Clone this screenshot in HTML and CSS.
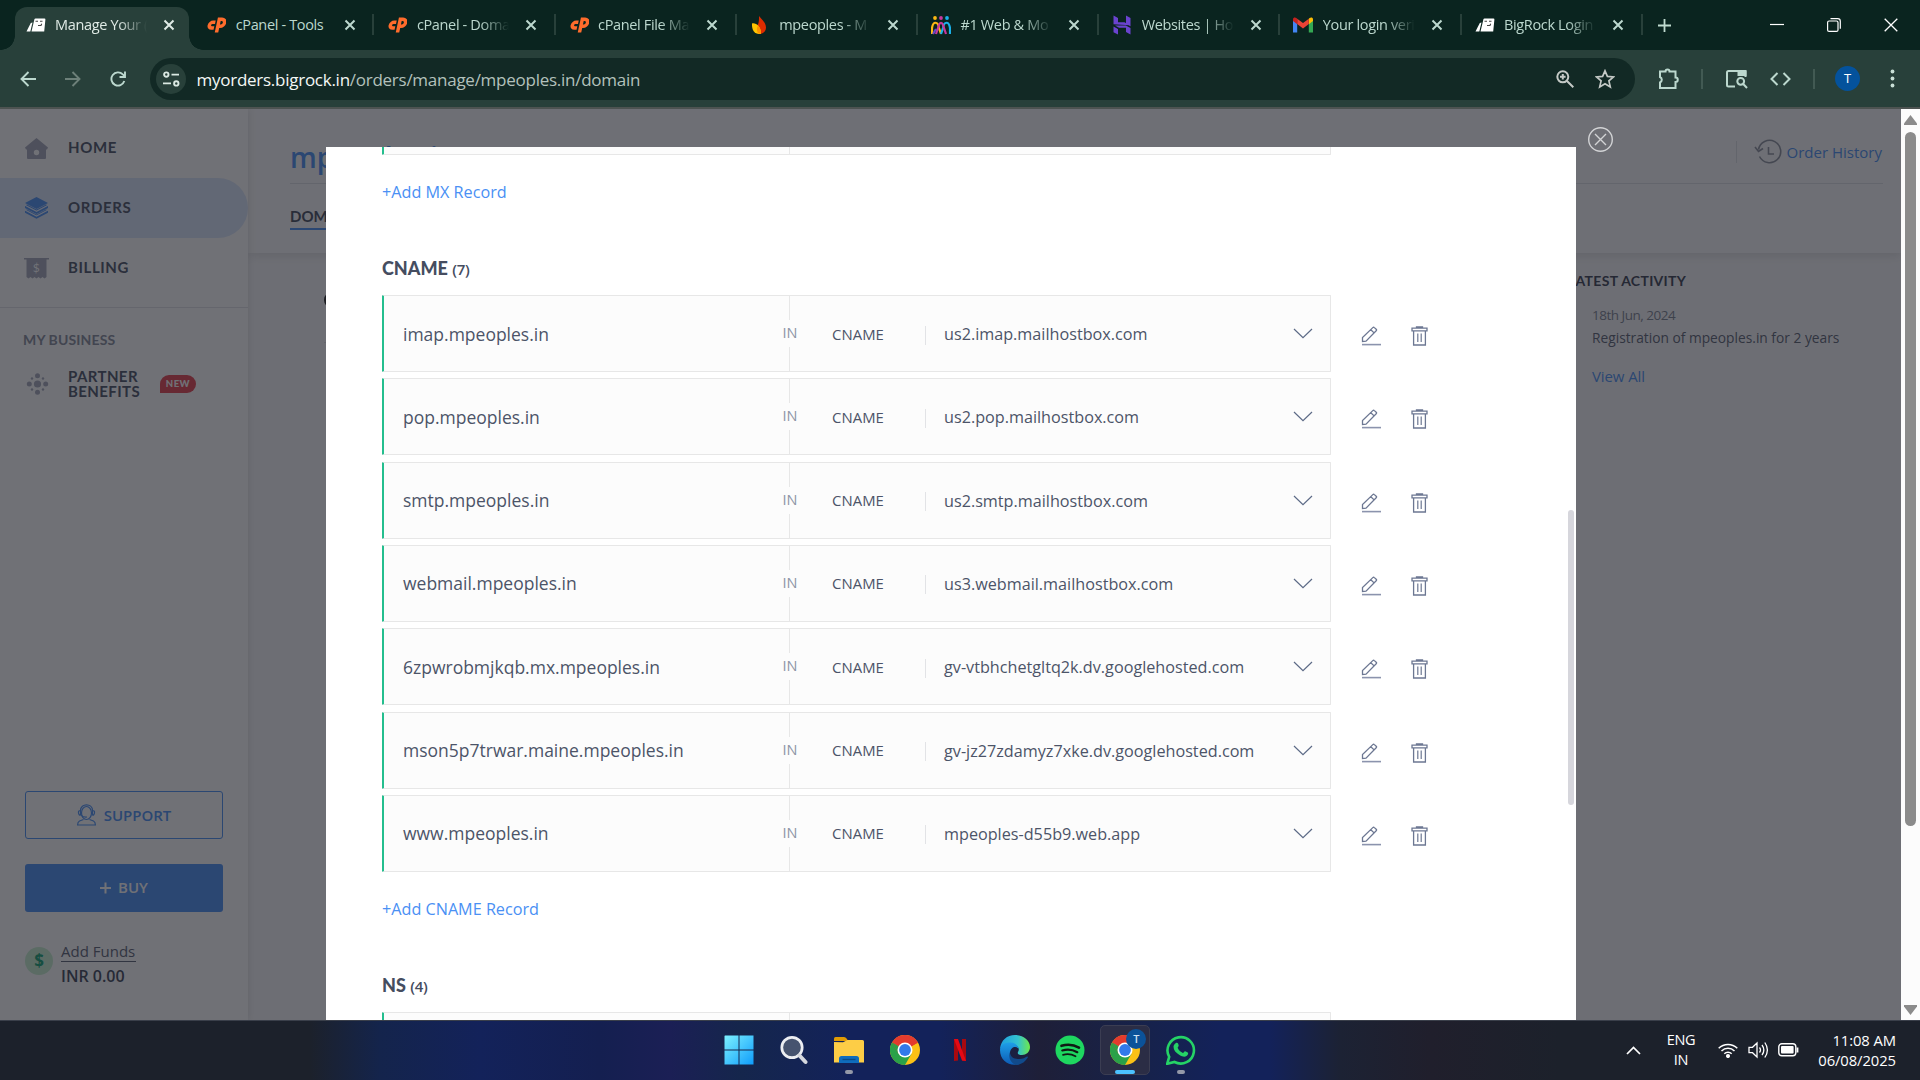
FILE: index.html
```html
<!DOCTYPE html>
<html lang="en">
<head>
<meta charset="utf-8">
<title>Manage Your Orders</title>
<link rel="stylesheet" href="styles.css">
</head>
<body>
<svg class="defs" aria-hidden="true">
  <symbol id="x" viewBox="0 0 12 12"><path d="M1.500 1.500l9 9M10.500 1.500l-9 9" fill="none" stroke="currentColor" stroke-width="2"/></symbol>
  <symbol id="bigrock" viewBox="0 0 20 20"><path d="M8.500 4Q8.700 3.500 9.500 3.500H18.500q1 0 .9 1L18.200 16.500H5.500z" fill="#fff"/><path d="M4.800 8L6.500 7.500 4.300 16.500H.5z" fill="#fff"/><path d="M9.500 6.200h2.500M14 6.200h2.500M12 10.500h3l.7-1.800" stroke="#444" stroke-width="1.100" fill="none"/></symbol>
  <symbol id="cpanel" viewBox="0 0 20 20"><g transform="translate(2.500 2) skewX(-12)"><path d="M8 5.300H5.500a2.800 2.800 0 0 0 0 5.800h2.300M11.300 15.600V2.300h2.500a3.300 3.300 0 0 1 0 7h-.9" fill="none" stroke="#ff6c2c" stroke-width="3.500"/></g></symbol>
  <symbol id="firebase" viewBox="0 0 20 20"><path d="M9 1c2 3 7 6 7 11.500 0 4-3 6.500-7 6.500-2-2-3-6-1-9.500C9.200 6 9 3 9 1z" fill="#dd2c00"/><path d="M2 8.500c4-1 9 3 9 10.300C5.500 20 1.500 16 2 8.500z" fill="#ffc400"/><path d="M8 10.500c2 2 3 4.500 3 8.300-2 .3-3-.6-3.600-1.800-.9-2-.7-4.500.6-6.500z" fill="#ff9100"/></symbol>
  <symbol id="people" viewBox="0 0 20 20"><g fill="none" stroke-width="2.200"><path d="M1 19V13c1-7 6-7 7 0l2 6" stroke="#fcb813"/><path d="M19 19v-6c-1-7-6-7-7 0l-2 6" stroke="#1ab0e8"/><path d="M5 19l3-9c1-3 3-3 4 0l3 9" stroke="#c8379d"/><path d="M2 19l3-5" stroke="#6747c7"/></g><circle cx="4" cy="3" r="1.900" fill="#fcb813"/><circle cx="10" cy="3" r="1.900" fill="#c8379d"/><circle cx="16" cy="3" r="1.900" fill="#1ab0e8"/></symbol>
  <symbol id="hostinger" viewBox="0 0 20 20"><path d="M1.500 9.300V.5L6 3v4.200l6.500.1 5 3zM14 .5L18.500 3v8.300L14 9zM1.500 11.500L6 14v5.500l-4.500-2.200zM3 10.500h10.800l4.700 2.500v6.500L14 17v-4.200H7z" fill="#6a43cf"/></symbol>
  <symbol id="gmail" viewBox="0 0 20 15"><path d="M0 2.500V15h4.200V5z" fill="#4285f4"/><path d="M20 2.500V15h-4.200V5z" fill="#34a853"/><path d="M15.800 1.200V6.800L20 3.600V1.800C20 0 18 -.6 16.600.5z" fill="#fbbc04"/><path d="M4.200 1.200L10 5.500l5.800-4.300v5.400L10 11 4.200 6.600z" fill="#ea4335"/><path d="M0 1.800v1.800l4.200 3.200V1.200L3.400.5C2-.6 0 0 0 1.800z" fill="#c5221f"/></symbol>
  <symbol id="chrome" viewBox="0 0 30 30"><circle cx="15" cy="15" r="15" fill="#fbc116"/><path d="M15 15L2 7.500A15 15 0 0 1 28 7.500z" fill="#e33b2e"/><path d="M2 7.500A15 15 0 0 0 15 30l6.500-11.200L15 15z" fill="#2aa148"/><path d="M8.500 18.700L2 7.500 15 15zM28 7.500H15V15z" fill="#e33b2e"/><path d="M2 7.500l6.500 11.300L15 15z" fill="#2aa148"/><circle cx="15" cy="15" r="7.500" fill="#fff"/><circle cx="15" cy="15" r="5.900" fill="#3279ea"/></symbol>
  <symbol id="chev" viewBox="0 0 20 11"><path d="M1 1l9 8.700L19 1" fill="none" stroke="#5c6a86" stroke-width="1.200"/></symbol>
  <symbol id="pencil" viewBox="0 0 20 20"><path d="M1 18.600h19" stroke="#8b93ad" stroke-width="1.600"/><path d="M1.500 15.500V11.500L11.800 1.600c.6-.6 1-.6 1.600 0l1.800 1.700c.5.500.5 1 0 1.500L5 15.200zM9.800 3.700l3.300 3.200" fill="none" stroke="#6c7792" stroke-width="1.300"/></symbol>
  <symbol id="trash" viewBox="0 0 17 20"><path d="M1 2.200h15v2.600H1zM5.500 1.800V.8h6v1M2.600 5v14h11.800V5" fill="none" stroke="#6c7792" stroke-width="1.300"/><path d="M6.800 7.500v8.500M10.200 7.500v8.500" stroke="#6c7792" stroke-width="1.200"/></symbol>
</svg>

<header class="tabs">
  <div class="tab active"><svg class="fav"><use href="#bigrock"/></svg><span class="tt">Manage Your (</span><svg class="tx"><use href="#x"/></svg></div>
  <div class="tab nosep"><svg class="fav"><use href="#cpanel"/></svg><span class="tt">cPanel - Tools</span><svg class="tx"><use href="#x"/></svg></div>
  <div class="tab"><svg class="fav"><use href="#cpanel"/></svg><span class="tt">cPanel - Doma</span><svg class="tx"><use href="#x"/></svg></div>
  <div class="tab"><svg class="fav"><use href="#cpanel"/></svg><span class="tt">cPanel File Ma</span><svg class="tx"><use href="#x"/></svg></div>
  <div class="tab"><svg class="fav"><use href="#firebase"/></svg><span class="tt">mpeoples - M</span><svg class="tx"><use href="#x"/></svg></div>
  <div class="tab"><svg class="fav"><use href="#people"/></svg><span class="tt">#1 Web &amp; Mo</span><svg class="tx"><use href="#x"/></svg></div>
  <div class="tab"><svg class="fav"><use href="#hostinger"/></svg><span class="tt">Websites | Hos</span><svg class="tx"><use href="#x"/></svg></div>
  <div class="tab"><svg class="fav"><use href="#gmail"/></svg><span class="tt">Your login veri</span><svg class="tx"><use href="#x"/></svg></div>
  <div class="tab"><svg class="fav"><use href="#bigrock"/></svg><span class="tt">BigRock Login</span><svg class="tx"><use href="#x"/></svg></div>
  <div class="newtab"><svg width="13" height="13"><path d="M6.500 0v13M0 6.500h13" stroke="#c0dbd0" stroke-width="1.800"/></svg></div>
  <div class="winbtns">
    <svg width="14" height="14"><path d="M0 6.500h14" stroke="#fff" stroke-width="1.200"/></svg>
    <svg width="14" height="14"><rect x=".6" y="3" width="10.400" height="10.400" rx="1.500" fill="none" stroke="#fff" stroke-width="1.200"/><path d="M3.500.7h7.200a2.600 2.600 0 0 1 2.600 2.600v7.500" fill="none" stroke="#fff" stroke-width="1.200"/></svg>
    <svg width="14" height="14"><path d="M.7.7l12.600 12.600M13.300.7L.7 13.300" stroke="#fff" stroke-width="1.300"/></svg>
  </div>
</header>

<nav class="toolbar">
  <div class="navbtns">
    <svg width="16" height="16"><path d="M16 8H1.500M8.500 1L1.500 8l7 7" fill="none" stroke="#bcd8ce" stroke-width="1.900"/></svg>
    <svg width="16" height="16"><path d="M0 8h14.500M7.500 1l7 7-7 7" fill="none" stroke="#6d8079" stroke-width="1.900"/></svg>
    <svg width="16" height="16"><path d="M14.300 10A6.600 6.600 0 1 1 12.800 3.400L15 5.500M15 .5v5.500H9.500" fill="none" stroke="#bcd8ce" stroke-width="1.900"/></svg>
  </div>
  <div class="omni">
    <span class="chip"><svg width="17" height="16" fill="none" stroke="#dbe9e3" stroke-width="1.900"><circle cx="3.300" cy="3.600" r="2.200"/><path d="M8.500 3.600H16M0 12.400h8"/><circle cx="13.300" cy="12.400" r="2.200"/></svg></span>
    <span class="url"><b>myorders.bigrock.in</b>/orders/manage/mpeoples.in/domain</span>
    <svg width="18" height="18" class="mag" fill="none" stroke="#c4c9c6" stroke-width="2"><circle cx="6.800" cy="6.800" r="5.500"/><path d="M11 11l6.300 6.300M6.800 4v5.600M4 6.800h5.600"/></svg>
    <svg width="20" height="20" viewBox="0 0 20 20" class="star"><path d="M10 1.800l2.400 5.600 6.100.5-4.600 4 1.400 6L10 14.700l-5.300 3.200 1.400-6-4.600-4 6.100-.5z" fill="none" stroke="#c4c9c6" stroke-width="1.700"/></svg>
  </div>
  <svg class="ext" width="22" height="22"><path d="M2 4.500h5.500a2 2 0 1 1 4 0h6v6a2 2 0 1 1 0 4.500v6H2v-5.500a3 3 0 0 0 0-5.500z" fill="none" stroke="#bcd8ce" stroke-width="2"/></svg>
  <i class="sep s1"></i>
  <svg class="side" width="23" height="20"><path d="M10 17.500H3.500q-1.500 0-1.500-1.500V3.500Q2 2 3.500 2H20.500v6" fill="none" stroke="#bcd8ce" stroke-width="2"/><path d="M12.500 1H20q1.500 0 1.500 1.500V7h-9z" fill="#bcd8ce"/><circle cx="15.700" cy="12.300" r="3.400" fill="none" stroke="#bcd8ce" stroke-width="2"/><path d="M18 14.800l4 4.200" stroke="#bcd8ce" stroke-width="2"/></svg>
  <svg class="code" width="21" height="14"><path d="M7.500 1L1.500 7l6 6M13.500 1l6 6-6 6" fill="none" stroke="#bcd8ce" stroke-width="2"/></svg>
  <i class="sep s2"></i>
  <span class="avatar">T</span>
  <svg class="dots" width="5" height="19" fill="#c9dfd6"><circle cx="2.500" cy="2.500" r="1.900"/><circle cx="2.500" cy="9.500" r="1.900"/><circle cx="2.500" cy="16.500" r="1.900"/></svg>
</nav>

<div class="viewport">
  <aside class="sidebar">
    <a class="item"><svg width="25" height="23"><path d="M12.500 1L24 10.500l-1 2h-1V21q0 1-1 1H4q-1 0-1-1v-8.500H2l-1-2z" fill="#a5a9bb"/><circle cx="12.500" cy="15.500" r="2.700" fill="#fff"/></svg><span>HOME</span></a>
    <a class="item on"><svg width="25" height="24" fill="#4a90f4"><path d="M12.500 1L24 7 12.500 13 1 7zM1 9.500l2-1L12.500 13.500 22 8.500l2 1v2.500l-11.500 6L1 12zM1 14.500l2-1 9.500 5 9.500-5 2 1v2.200l-11.500 6L1 16.700z"/><path d="M1 9.300l11.500 6 11.500-6M1 14l11.500 6L24 14" fill="none" stroke="#e8f0ff" stroke-width="1.200"/></svg><span>ORDERS</span></a>
    <a class="item"><svg width="25" height="23"><path d="M0 1h25v1.500h-2.500V20l-2 1.500-2-1.500-2 1.500-2-1.500-2 1.500-2-1.500-2 1.500-2-1.500-2 1.500-2-1.500V2.500H0z" fill="#a5a9bb"/><text x="12.500" y="15" text-anchor="middle" class="dl">$</text></svg><span>BILLING</span></a>
    <hr>
    <h6>MY BUSINESS</h6>
    <a class="item partner"><svg width="22" height="22" viewBox="-1 0 22 22" fill="#a5a9bb"><circle cx="11" cy="11" r="3.600"/><circle cx="11" cy="2.800" r="2.500"/><circle cx="11" cy="19.200" r="2.500"/><circle cx="2.800" cy="11" r="2.500"/><circle cx="19.200" cy="11" r="2.500"/><circle cx="5.500" cy="5.500" r="1.200"/><circle cx="16.500" cy="5.500" r="1.200"/><circle cx="5.500" cy="16.500" r="1.200"/><circle cx="16.500" cy="16.500" r="1.200"/></svg><span>PARTNER<br>BENEFITS</span><em>NEW</em></a>
    <div class="grow"></div>
    <a class="btn support"><svg width="19" height="22" fill="none" stroke="#4a90f4" stroke-width="1.200"><ellipse cx="9.500" cy="9" rx="5" ry="6.500"/><path d="M3.500 6.500C3.500-1 15.500-1 15.500 6.500M3.500 6.500q-2.500 0-2 2.500t2 2zM15.500 6.500q2.500 0 2 2.500t-2 2zM4 11q2 2.500 6 2M6.500 15.500L2.500 17Q.6 18 .6 21h17.800q0-3-1.900-4l-4-1.500"/></svg><span>SUPPORT</span></a>
    <a class="btn buy"><svg width="11" height="12"><path d="M5.500.5v11M0 6h11" stroke="#fff" stroke-width="2"/></svg><span>BUY</span></a>
    <div class="funds"><i>$</i><p><u>Add Funds</u><b>INR 0.00</b></p></div>
  </aside>

  <main class="main">
    <section class="head">
      <div class="title"><h1>mpeoples.in</h1><div class="hist"><svg width="28" height="26" fill="none" stroke="#8d929f" stroke-width="1.600"><path d="M5.500 17.500A11.200 11.200 0 1 0 4.500 10.500M1 8l3.500 4.500L9 9.500M14.500 8v7H20"/></svg>Order History</div></div>
      <div class="subtabs"><span>DOMAIN</span></div>
    </section>
    <section class="body">
      <div class="panel"><i></i></div>
      <div class="activity"><h3>LATEST ACTIVITY</h3><p class="dt">18th Jun, 2024</p><p>Registration of mpeoples.in for 2 years</p><a>View All</a></div>
    </section>
  </main>

  <div class="scroll"><svg width="13" height="10"><path d="M6.500 0L13 8.500V10H0V8.500z" fill="#8b8b8b"/></svg><i></i><svg width="13" height="10"><path d="M6.500 10L13 1.500V0H0v1.500z" fill="#8b8b8b"/></svg></div>

  <div class="overlay"></div>
  <svg class="close" width="26" height="26" fill="none" stroke="#d2d3d5" stroke-width="1.400"><circle cx="12.500" cy="12.500" r="11.800"/><path d="M7 7l11 11M18 7L7 18"/></svg>

  <div class="modal">
    <div class="rec stub top"><div class="box"></div></div>
    <a class="add mx">+Add MX Record</a>
    <h2>CNAME <small>(7)</small></h2>
    <div class="list">
      <div class="rec"><div class="box"><span class="nm">imap.mpeoples.in</span><span class="cls">IN</span><span class="ty">CNAME</span><span class="val">us2.imap.mailhostbox.com</span><svg class="cv"><use href="#chev"/></svg></div><svg class="pc"><use href="#pencil"/></svg><svg class="tr"><use href="#trash"/></svg></div>
      <div class="rec"><div class="box"><span class="nm">pop.mpeoples.in</span><span class="cls">IN</span><span class="ty">CNAME</span><span class="val">us2.pop.mailhostbox.com</span><svg class="cv"><use href="#chev"/></svg></div><svg class="pc"><use href="#pencil"/></svg><svg class="tr"><use href="#trash"/></svg></div>
      <div class="rec"><div class="box"><span class="nm">smtp.mpeoples.in</span><span class="cls">IN</span><span class="ty">CNAME</span><span class="val">us2.smtp.mailhostbox.com</span><svg class="cv"><use href="#chev"/></svg></div><svg class="pc"><use href="#pencil"/></svg><svg class="tr"><use href="#trash"/></svg></div>
      <div class="rec"><div class="box"><span class="nm">webmail.mpeoples.in</span><span class="cls">IN</span><span class="ty">CNAME</span><span class="val">us3.webmail.mailhostbox.com</span><svg class="cv"><use href="#chev"/></svg></div><svg class="pc"><use href="#pencil"/></svg><svg class="tr"><use href="#trash"/></svg></div>
      <div class="rec"><div class="box"><span class="nm">6zpwrobmjkqb.mx.mpeoples.in</span><span class="cls">IN</span><span class="ty">CNAME</span><span class="val">gv-vtbhchetgltq2k.dv.googlehosted.com</span><svg class="cv"><use href="#chev"/></svg></div><svg class="pc"><use href="#pencil"/></svg><svg class="tr"><use href="#trash"/></svg></div>
      <div class="rec"><div class="box"><span class="nm">mson5p7trwar.maine.mpeoples.in</span><span class="cls">IN</span><span class="ty">CNAME</span><span class="val">gv-jz27zdamyz7xke.dv.googlehosted.com</span><svg class="cv"><use href="#chev"/></svg></div><svg class="pc"><use href="#pencil"/></svg><svg class="tr"><use href="#trash"/></svg></div>
      <div class="rec"><div class="box"><span class="nm">www.mpeoples.in</span><span class="cls">IN</span><span class="ty">CNAME</span><span class="val">mpeoples-d55b9.web.app</span><svg class="cv"><use href="#chev"/></svg></div><svg class="pc"><use href="#pencil"/></svg><svg class="tr"><use href="#trash"/></svg></div>
    </div>
    <a class="add cn">+Add CNAME Record</a>
    <h2 class="ns">NS <small>(4)</small></h2>
    <div class="rec stub"><div class="box"></div></div>
    <i class="thumb"></i>
  </div>
</div>

<footer class="taskbar">
  <div class="apps">
    <span><svg width="30" height="30"><defs><linearGradient id="w" gradientUnits="userSpaceOnUse" x1="0" y1="0" x2="30" y2="30"><stop offset="0" stop-color="#7ff3ff"/><stop offset="1" stop-color="#0d9bfb"/></linearGradient></defs><path d="M1 .5h13.500v14H.5V1zM15.500.5H29.500v14H15.500zM.5 15.500h14v14H.5zM15.500 15.500h14v14h-14z" fill="url(#w)"/></svg></span>
    <span><svg width="28" height="30"><circle cx="12" cy="12.500" r="10.200" fill="#46536f" stroke="#eceef2" stroke-width="2.700"/><path d="M19.500 20.500l6 6.500" stroke="#d5d8de" stroke-width="4" stroke-linecap="round"/></svg></span>
    <span><svg width="30" height="28"><path d="M0 2.500Q0 1 1.500 1h8.500q1.500 0 3 2l1 2H0z" fill="#e09b04"/><path d="M0 6l9 .2 4.500-2.200H28.500q1.500 0 1.500 1.500V26.500H0z" fill="#fdcd46"/><path d="M5 27v-4.500Q5 20 7.500 20h15q2.500 0 2.500 2.500V27z" fill="#0f6cbd"/><path d="M8.500 23.500h13" stroke="#0a4a86" stroke-width="1.300"/></svg><i></i></span>
    <span><svg width="30" height="30"><use href="#chrome"/></svg></span>
    <span><svg width="12" height="22"><path d="M0 0h4v21.500l-4 .5zM8 0h4v22l-4-.5z" fill="#a9090f"/><path d="M0 0h4l8 22-4-.5z" fill="#e50914"/></svg></span>
    <span><svg width="30" height="30"><defs><linearGradient id="e1"><stop offset="0" stop-color="#1f9fe0"/><stop offset=".6" stop-color="#33c3d0"/><stop offset="1" stop-color="#6ee84a"/></linearGradient><linearGradient id="e2" x2="0" y2="1"><stop offset="0" stop-color="#1e9fe8"/><stop offset="1" stop-color="#0d5bb5"/></linearGradient></defs><path d="M0 14C1 5 7 0 15 0c9 0 15 6 15 12 0 5-4 8-8 8-3 0-5-1-4-3 2-3 0-7-4-7C8 9 2 10 0 14z" fill="url(#e1)"/><path d="M0 15C0 10 5 7 10 7.500c5 0 8 3 8.500 6-3-3-8-1-8.500 4-.5 6 4 11 9 11.500-9 3-19-3-19-14z" fill="url(#e2)"/><path d="M10 17c0 5 4 7 9 7 4 0 6-1.500 8-2.500 1-.3 1.200.5.800 1-2 3.500-6 7-11 7.500-6-1-9-8-6.800-13z" fill="#114a8b"/></svg></span>
    <span><svg width="30" height="30"><circle cx="15" cy="15" r="14.500" fill="#1ed760"/><g fill="none" stroke="#101a14" stroke-linecap="round"><path d="M6.500 10.800c6-1.700 12.500-1 17.500 1.800" stroke-width="2.600"/><path d="M7.300 15.500c5-1.400 10.500-.8 15 1.700" stroke-width="2.200"/><path d="M8 19.800c4.400-1.200 8.700-.7 12.500 1.500" stroke-width="1.800"/></g></svg></span>
    <span class="cur"><svg width="30" height="30"><use href="#chrome"/></svg><b>T</b><i></i></span>
    <span><svg width="30" height="30"><path d="M1.200 28.800l2-7A13.200 13.200 0 1 1 8.500 27z" fill="none" stroke="#25d366" stroke-width="2.600"/><path d="M10 8c1.500-.7 2 .2 2.600 2 .5 1.500-.9 1.900-1 2.800 1 2.500 3 4.300 5.300 5.200.9 0 1.400-2 2.300-1.700 2.600 1.100 3.400 1.500 2.800 3-1.500 3.200-5 2.800-8.500.8-3.500-2-6-5-6-8.300 0-1.500 1-3 2.500-3.800z" fill="#25d366"/></svg><i></i></span>
  </div>
  <div class="tray">
    <svg width="15" height="9"><path d="M1 8l6.500-6.500L14 8" fill="none" stroke="#fff" stroke-width="1.700"/></svg>
    <div class="lang">ENG<br>IN</div>
    <svg class="wifi" width="20" height="16" fill="none" stroke="#fff" stroke-width="1.500"><path d="M.7 6.300a13.200 13.200 0 0 1 18.600 0M3.500 9a9.200 9.200 0 0 1 13 0M6.300 11.700a5.300 5.300 0 0 1 7.400 0"/><circle cx="10" cy="14" r="1.300" fill="#fff"/></svg>
    <svg class="vol" width="21" height="18" fill="none" stroke="#fff" stroke-width="1.300"><path d="M1 6.300h3.500L9 2v14l-4.500-4.300H1zM11.500 6.500q2 2.500 0 5M14 4q3.700 5 0 10M16.800 1.500q5.200 7.500 0 15"/></svg>
    <svg class="bat" width="21" height="14"><rect x=".8" y=".8" width="17" height="12" rx="3" fill="none" stroke="#fff" stroke-width="1.400"/><rect x="3" y="3" width="12.600" height="7.600" rx="1" fill="#fff"/><path d="M19.500 4.500v5" stroke="#fff" stroke-width="1.800"/></svg>
    <div class="clock">11:08 AM<br>06/08/2025</div>
  </div>
</footer>
</body>
</html>
```
FILE: styles.css
```css
* { box-sizing: border-box; margin: 0; padding: 0; }
body { width: 1920px; height: 1080px; overflow: hidden; display: flex; flex-direction: column; font-family: "Open Sans", "Noto Sans", sans-serif; background: #0a241f; }
svg { flex: none; display: block; }
i, em { font-style: normal; }
.defs { width: 0; height: 0; position: absolute; }

/* tab strip */
.tabs { flex: none; height: 50px; display: flex; padding-left: 15px; background: #0a241f; }
.tab { position: relative; width: 181.200px; height: 50px; display: flex; align-items: center; padding-left: 10px; color: #bcd8ce; }
.tab::after { content: ""; position: absolute; right: 3px; top: 14px; width: 2px; height: 21px; background: #28403a; }
.tab.active { width: 174px; height: 43px; margin: 7px 7.200px 0 0; padding: 0 0 7px 10.500px; background: #28403a; border-radius: 12px 12px 0 0; color: #e0ebe6; }
.tab.active::after { right: -14px; top: auto; bottom: 0; width: 14px; height: 14px; background: radial-gradient(circle at 100% 0, transparent 13.500px, #28403a 14px); }
.tab.active::before { content: ""; position: absolute; left: -14px; bottom: 0; width: 14px; height: 14px; background: radial-gradient(circle at 0 0, transparent 13.500px, #28403a 14px); }
.fav { width: 20px; height: 20px; }
.tt { width: 98px; margin-left: 9.500px; white-space: nowrap; font-size: 14.500px; letter-spacing: -.35px; line-height: 22px; -webkit-mask-image: linear-gradient(90deg, #000 64%, transparent 94%); mask-image: linear-gradient(90deg, #000 64%, transparent 94%); }
.nosep .tt { -webkit-mask-image: none; mask-image: none; }
.tx { width: 12px; height: 12px; margin-left: 10px; }
.newtab { width: 46px; display: flex; align-items: center; padding-left: 12px; }
.winbtns { margin-left: auto; display: flex; align-items: center; gap: 43px; padding-right: 22px; }

/* address bar */
.toolbar { flex: none; height: 59px; display: flex; align-items: center; background: #28403a; border-bottom: 2px solid #4d5351; }
.navbtns { width: 150px; display: flex; gap: 29px; padding-left: 19.500px; }
.omni { width: 1485px; height: 42px; border-radius: 21px; background: #122925; display: flex; align-items: center; padding-left: 6px; }
.chip { width: 30px; height: 30px; border-radius: 50%; background: #28403a; display: flex; align-items: center; justify-content: center; }
.url { margin-left: 10.500px; padding-top: 2px; font-size: 17px; letter-spacing: -.26px; color: #b3c1bc; white-space: nowrap; }
.url b { font-weight: 400; color: #f4f8f6; }
.mag { margin-left: auto; }
.star { margin: 0 20px 0 21px; }
.ext { margin: -2px 0 0 22.500px; }
.sep { width: 2px; height: 20px; background: #425a53; }
.s1 { margin-left: 21.500px; }
.side { margin-left: 21.500px; }
.code { margin-left: 22px; }
.s2 { margin-left: 22px; }
.avatar { margin-left: 20.500px; width: 25px; height: 25px; border-radius: 50%; background: #04529c; color: #fff; font-size: 13px; line-height: 25px; text-align: center; }
.dots { margin-left: 29.500px; }

/* page area */
.viewport { position: relative; flex: none; height: 911px; display: flex; overflow: hidden; background: #f8f8fa; }
.sidebar { width: 248px; background: #fff; display: flex; flex-direction: column; padding-top: 9px; box-shadow: 0 0 8px #0002; z-index: 1; }
.item { height: 60px; display: flex; align-items: center; padding-left: 24px; font: 700 15px/15px Lato, sans-serif; letter-spacing: .6px; color: #4b5366; }
.item > svg { width: 25px; }
.item > span { margin-left: 19px; padding-bottom: 2px; }
.item.on { background: #dbe7fb; border-radius: 0 30px 30px 0; }
.dl { font: 12px Lato, sans-serif; fill: #fff; }
.sidebar hr { border: 0; border-top: 1px solid #e2e3e8; margin-top: 9px; }
.sidebar h6 { font: 700 14px/20px Lato, sans-serif; letter-spacing: .15px; color: #868c9b; padding: 22px 0 0 23px; }
.partner { height: 40px; margin-top: 14px; }
.partner > span { width: 73px; padding: 0; letter-spacing: .4px; }
.partner em { margin-left: 19px; width: 36px; height: 18px; border-radius: 9px 9px 9px 0; background: #e8434f; color: #fff; font: 900 9.500px/18px Lato, sans-serif; text-align: center; letter-spacing: .5px; }
.grow { flex: 1; }
.btn { margin: 0 25px 25px; height: 48px; display: flex; align-items: center; justify-content: center; border-radius: 3px; font-size: 15px; font-weight: 600; }
.support { border: 1px solid #4a90f4; color: #4a90f4; gap: 8px; }
.buy { background: #4a90f4; color: #fff; gap: 7px; }
.buy span { padding-bottom: 2px; }
.funds { height: 83px; display: flex; padding-left: 25px; }
.funds i { width: 28px; height: 28px; margin-top: 10px; border-radius: 50%; background: #c8f0d0; color: #14a273; font-weight: 700; font-size: 17px; line-height: 27px; text-align: center; }
.funds p { margin-left: 8px; font-size: 15px; line-height: 20px; color: #5b6274; padding-top: 4px; }
.funds u { display: block; width: 75px; text-decoration: none; border-bottom: 1px solid #5b6274; }
.funds b { display: block; font-size: 16px; font-weight: 600; color: #3d4557; margin-top: 4px; white-space: nowrap; }

.main { flex: 1; display: flex; flex-direction: column; }
.head { height: 144px; padding: 0 18px 0 42px; background: #fafafb; box-shadow: 0 3px 10px #0000001c; }
.title { height: 74.500px; display: flex; align-items: center; justify-content: space-between; border-bottom: 1px solid #dedfe4; padding-top: 13px; }
.title h1 { font: 600 28px/34px "Open Sans", sans-serif; color: #4a90f4; padding-top: 9px; }
.hist { height: 22px; display: flex; align-items: center; gap: 5px; margin-right: 1px; padding-left: 17px; border-left: 1px solid #dedfe4; color: #4a90f4; font-size: 15px; }
.subtabs span { display: inline-block; margin-top: 21px; height: 25px; border-bottom: 2px solid #4a90f4; font: 700 15px/23px Lato, sans-serif; color: #454d60; }
.body { flex: 1; display: flex; padding-left: 76px; }
.panel { width: 1243px; padding-top: 38px; border-bottom: 0; }
.panel i { display: block; width: 18px; height: 18px; border-radius: 50%; background: #222; }
.panel::after { content: ""; display: block; margin-top: 33px; border-top: 1px solid #dedfe4; }
.activity { padding-top: 18px; font-size: 13.750px; line-height: 22.500px; color: #5a6172; }
.activity h3 { font: 700 14px/20px Lato, sans-serif; letter-spacing: .3px; color: #3a4152; margin: 0 0 13px 1px; }
.activity p, .activity a { margin-left: 25px; }
.activity a { display: block; margin-top: 16px; font-size: 15px; letter-spacing: -.1px; color: #4a90f4; }
.activity .dt { color: #7d8392; font-size: 13.500px; letter-spacing: -.5px; }

.scroll { width: 19px; background: #fcfcfc; display: flex; flex-direction: column; align-items: center; padding: 6px 0 5px; z-index: 3; }
.scroll i { width: 11px; height: 694px; margin: 7px 0 auto; border-radius: 6px; background: #8b8b8b; }

.overlay { position: absolute; inset: 0 19px 0 0; background: rgba(24, 26, 34, .62); z-index: 2; }
.close { position: absolute; left: 1588px; top: 18px; z-index: 3; }

/* DNS records dialog */
.modal { position: absolute; left: 326px; top: 38px; width: 1250px; height: 873px; padding-left: 56px; background: #fff; overflow: hidden; z-index: 3; }
.thumb { position: absolute; right: 2px; top: 363px; width: 6px; height: 295px; border-radius: 3px; background: #d6d6dc; }
.modal h2 { height: 26px; margin-top: 52px; font: 900 18px/26px Lato, sans-serif; color: #454d60; }
.modal small { font: 600 15px/26px "Open Sans", sans-serif; letter-spacing: -.2px; }
.add { display: block; height: 22px; font-size: 16.200px; line-height: 22px; color: #4a90f4; }
.add.mx { margin-top: 26px; }
.add.cn { margin-top: 26px; }
.list { margin-top: 14.500px; display: flex; flex-direction: column; gap: 6.330px; }
.rec { height: 77px; display: flex; align-items: center; }
.box { position: relative; width: 949px; height: 100%; display: grid; grid-template-columns: 399px 30px 128px 333px 24px; align-items: center; padding-left: 19px; background: linear-gradient(#e7e7e7, #e7e7e7) 405px 0 / 1px 100% no-repeat #fcfcfc; border: 1px solid #e7e7e7; border-left: 2px solid #24be8e; border-radius: 1px; color: #4c5468; }
.nm { font-size: 17.500px; }
.cls { height: 27px; line-height: 26px; text-align: center; font-size: 14.500px; color: #8d95a6; margin-left: -28px; width: 32px; background: #fcfcfc; justify-self: start; }
.ty { margin-top: 3px; font-size: 14.900px; letter-spacing: .05px; border-right: 1px solid #e2e3e6; height: 19px; line-height: 16px; width: 94px; }
.val { font-size: 16.200px; margin-left: -16px; white-space: nowrap; padding-top: 1px; }
.cv { width: 20px; height: 11px; }
.pc { width: 20px; height: 20px; margin-left: 30px; margin-top: 5px; }
.tr { width: 17px; height: 20px; margin-left: 30px; margin-top: 5px; }
.stub.top { height: 7.500px; overflow: hidden; align-items: flex-end; }
.stub.top .box { height: 40px; }
.modal h2.ns { margin-top: 52px; }
.ns + .stub { margin-top: 14px; }

/* taskbar */
.taskbar { flex: none; height: 60px; display: grid; grid-template-columns: 1fr 492px 1fr; align-items: center; padding-bottom: 1px; color: #fff; border-top: 1px solid #3a3f4a; background: linear-gradient(90deg, #1c212b 0, #1c212b 310px, #14244c 380px, #13225a 480px, #141f50 600px, #1b1f55 670px, #15264c 740px, #13225a 850px, #13225a 940px, #1e1f38 1040px, #16224c 1150px, #13225a 1220px, #13225a 1270px, #1c2234 1340px, #201f2c 1430px, #1c212b 1560px); }
.apps { grid-column: 2; display: flex; gap: 5.200px; }
.apps span { position: relative; width: 50px; height: 50px; flex: none; display: flex; align-items: center; justify-content: center; border-radius: 5px; }
.apps i { position: absolute; bottom: 1px; left: 21px; width: 8px; height: 4px; border-radius: 2px; background: #9499a8; }
.apps .cur { background: #2b2d45; border: 1px solid #3b3d52; }
.cur b { position: absolute; right: 3px; top: 3px; width: 20px; height: 20px; border-radius: 50%; background: #0b5299; font: 600 11px/20px "Open Sans", sans-serif; text-align: center; color: #cfe0f2; }
.apps .cur i { left: 14px; width: 20px; bottom: 0; background: #4cc2ff; }
.tray { justify-self: end; display: flex; align-items: center; padding-right: 24px; font-size: 14.500px; line-height: 20px; letter-spacing: -.3px; }
.lang { margin-left: 24px; width: 32px; text-align: center; }
.wifi { margin-left: 21px; }
.vol { margin-left: 10px; }
.bat { margin-left: 9px; }
.clock { width: 97px; text-align: right; font-size: 14.800px; letter-spacing: -.08px; }
```
